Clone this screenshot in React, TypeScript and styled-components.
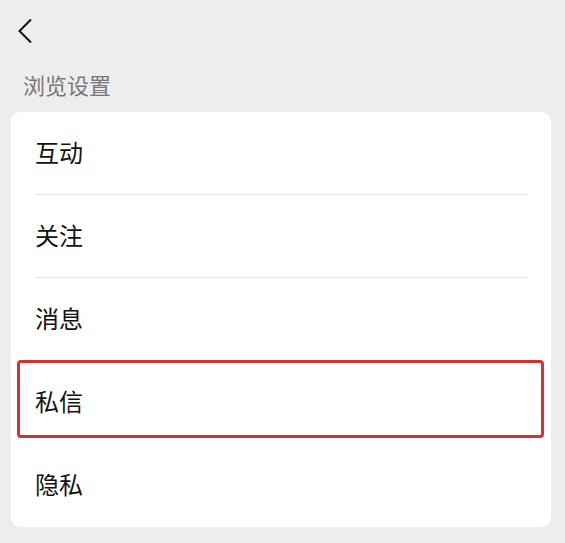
import React from "react";
import styled, { createGlobalStyle } from "styled-components";

const Global = createGlobalStyle`
  html, body { margin: 0; padding: 0; background: #ededed; }
  body { font-family: "Noto Sans CJK SC", "Noto Sans", sans-serif; }
`;

const Page = styled.div`
  width: 565px;
  height: 543px;
  background: #ededed;
  display: flex;
  flex-direction: column;
  box-sizing: border-box;
  padding: 0 14px 0 11px;
  overflow: hidden;
`;

const TopBar = styled.div`
  height: 62px;
  display: flex;
  align-items: center;
  padding-left: 6px;
`;

const BackButton = styled.button`
  border: 0;
  background: transparent;
  padding: 0;
  width: 20px;
  height: 28px;
  display: flex;
  align-items: center;
  justify-content: flex-start;
  cursor: pointer;
`;

const SectionTitle = styled.div`
  font-size: 22px;
  line-height: 30px;
  color: #777;
  padding-left: 12px;
  margin: 7px 0 13px;
  height: 30px;
`;

const Card = styled.div`
  background: #fff;
  border-radius: 9px;
  display: flex;
  flex-direction: column;
  position: relative;
`;

const Row = styled.div<{ $divider?: boolean }>`
  height: 83px;
  box-sizing: border-box;
  display: flex;
  align-items: center;
  padding-left: 24px;
  padding-bottom: 5px;
  position: relative;
  font-size: 24px;
  color: #111;
  &::after {
    content: "";
    display: ${(p) => (p.$divider ? "block" : "none")};
    position: absolute;
    left: 24px;
    right: 23px;
    bottom: 0;
    height: 1px;
    background: #e6e6e6;
  }
`;

const Highlight = styled.div`
  position: absolute;
  left: 6px;
  right: 7px;
  top: -1px;
  bottom: 6px;
  border: 3px solid #d8302a;
  border-radius: 4px;
  pointer-events: none;
`;

const items = [
  { label: "互动", divider: true },
  { label: "关注", divider: true },
  { label: "消息", divider: false },
  { label: "私信", divider: false, highlight: true },
  { label: "隐私", divider: false },
];

export default function App() {
  return (
    <>
      <Global />
      <Page>
        <TopBar>
          <BackButton aria-label="返回">
            <svg width="16" height="26" viewBox="0 0 16 26">
              <path d="M14 1.5 L2.5 13 L14 24.5" fill="none" stroke="#111" strokeWidth="2" />
            </svg>
          </BackButton>
        </TopBar>
        <SectionTitle>浏览设置</SectionTitle>
        <Card>
          {items.map((it) => (
            <Row key={it.label} $divider={it.divider}>
              {it.label}
              {it.highlight && <Highlight />}
            </Row>
          ))}
        </Card>
      </Page>
    </>
  );
}
